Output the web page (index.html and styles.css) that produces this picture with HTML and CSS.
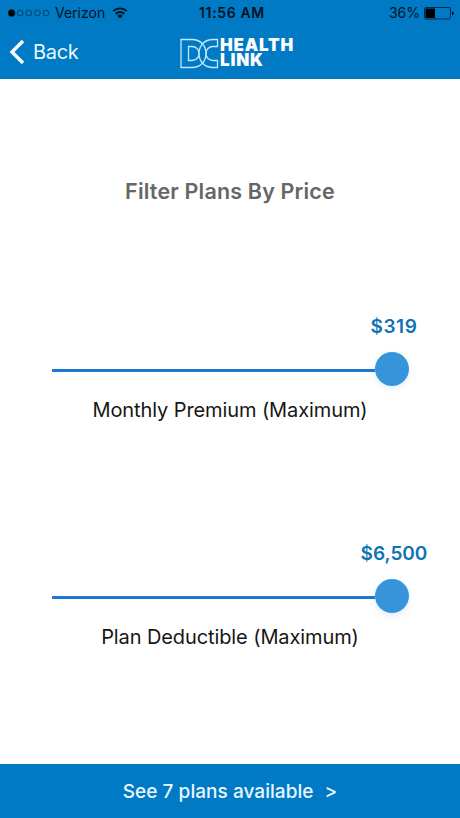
FILE: index.html
```
<!DOCTYPE html>
<html lang="en">

<head>
    <meta charset="UTF-8">
    <meta name="viewport" content="width=device-width, initial-scale=1.0">
    <title>DC Health Link - Filter Plans</title>
    <link rel="stylesheet" href="styles.css">
</head>

<body>
    <header class="header">
        <div class="status-bar">
            <div class="status-left">
                <svg class="signal" width="42" height="8" viewBox="0 0 42 8">
                    <circle class="signal-on" cx="3.6" cy="4" r="3.5" />
                    <circle cx="12.2" cy="4" r="2.9" />
                    <circle cx="20.8" cy="4" r="2.9" />
                    <circle cx="29.4" cy="4" r="2.9" />
                    <circle cx="38" cy="4" r="2.9" />
                </svg>
                <span class="carrier">Verizon</span>
                <svg class="wifi" width="16" height="12" viewBox="0 0 16 12">
                    <path d="M1.2 4.2a9.7 9.7 0 0 1 13.6 0M3.6 6.8a6.3 6.3 0 0 1 8.8 0" />
                    <path class="wifi-dot" d="M8 11.5L5.2 8.8a4 4 0 0 1 5.6 0z" />
                </svg>
            </div>
            <span class="clock">11:56 AM</span>
            <div class="status-right">
                <span class="battery-text">36%</span>
                <svg class="battery" width="30" height="13" viewBox="0 0 30 13">
                    <rect class="battery-case" x="0.5" y="0.5" width="26" height="11.5" rx="1.5" />
                    <rect x="1.5" y="1.5" width="9.5" height="9.5" />
                    <path d="M28 4.2q1.6.6 1.6 2t-1.6 2z" />
                </svg>
            </div>
        </div>
        <nav class="nav-bar">
            <a class="back" href="#">
                <svg width="16" height="26" viewBox="0 0 16 26">
                    <path d="M14 2L3 13l11 11" />
                </svg>
                <span>Back</span>
            </a>
            <div class="logo">
                <svg width="39" height="31" viewBox="0 0 39 31">
                    <path d="M1 1.500h11c8.500 0 14 6 14 14s-5.500 14-14 14H1zM8.500 8.500v14h3.500c4 0 7-2.800 7-7s-3-7-7-7z" />
                    <path d="M37.500 1.500H33c-8.500 0-14 6-14 14s5.500 14 14 14h4.500v-7H33c-4 0-7-2.800-7-7s3-7 7-7h4.500z" />
                </svg>
                <div class="logo-text">
                    <div class="logo-health">HEALTH</div>
                    <div class="logo-link">LINK</div>
                </div>
            </div>
        </nav>
    </header>

    <main class="content">
        <h1>Filter Plans By Price</h1>

        <section class="filter">
            <div class="value premium">$319</div>
            <div class="slider">
                <div class="track"></div>
                <div class="thumb"></div>
            </div>
            <div class="filter-label">Monthly Premium (Maximum)</div>
        </section>

        <section class="filter">
            <div class="value">$6,500</div>
            <div class="slider">
                <div class="track"></div>
                <div class="thumb"></div>
            </div>
            <div class="filter-label">Plan Deductible (Maximum)</div>
        </section>
    </main>

    <button class="see-plans"><span>See 7 plans available</span><span>&gt;</span></button>
</body>

</html>
```

FILE: styles.css
```
body {
    font-family: 'Inter', sans-serif;
    margin: 0;
    background-color: #fff;
    display: flex;
    flex-direction: column;
    height: 818px;
    overflow: hidden;
}

.header {
    background-color: #007ac5;
    height: 79px;
    flex-shrink: 0;
}

.status-bar {
    display: grid;
    grid-template-columns: 1fr auto 1fr;
    align-items: center;
    height: 26px;
    padding: 0 6px 0 8px;
    font-size: 14px;
    line-height: 26px;
    color: #001320;
}

.status-left,
.status-right {
    display: flex;
    align-items: center;
}

.status-right {
    justify-content: flex-end;
    gap: 4px;
}

.signal {
    fill: none;
    stroke: #003354;
    stroke-width: 0.8;
}

.signal-on {
    fill: #000;
}

.carrier {
    margin: 0 7px 0 5px;
}

.wifi {
    fill: none;
    stroke: #001320;
    stroke-width: 1.8;
}

.wifi-dot {
    fill: #001320;
    stroke: none;
}

.clock {
    font-weight: 600;
    letter-spacing: 0.65px;
    padding-left: 2px;
}

.battery-case {
    fill: none;
    stroke: #002a45;
}

.nav-bar {
    display: grid;
    grid-template-columns: 1fr auto 1fr;
    align-items: center;
    height: 52px;
    padding: 0 0 0 9px;
}

.back {
    display: flex;
    align-items: center;
    gap: 8px;
    color: #e9f7ff;
    font-size: 20px;
    letter-spacing: -0.3px;
    text-decoration: none;
}

.back path {
    fill: none;
    stroke: #fff;
    stroke-width: 3.4;
}

.logo {
    display: flex;
    align-items: center;
    gap: 1px;
    padding: 2px 0 0 5px;
}

.logo path {
    fill: none;
    stroke: #c4e6fa;
    stroke-width: 1.3;
}

.logo-text {
    color: #fff;
    font-size: 17px;
    line-height: 15.5px;
    font-weight: 900;
}

.logo-health {
    letter-spacing: 0.8px;
}

.logo-link {
    letter-spacing: 0.8px;
}

.content {
    flex: 1;
    min-height: 0;
}

h1 {
    margin: 98px 0 112px;
    text-align: center;
    font-size: 21.5px;
    line-height: 28px;
    font-weight: 600;
    letter-spacing: 0.17px;
    color: #666;
}

.filter {
    height: 227px;
}

.value {
    width: 136px;
    margin-left: 326px;
    text-align: center;
    font-size: 19px;
    line-height: 20px;
    font-weight: 600;
    color: #0f73b3;
}

.premium {
    letter-spacing: 0.6px;
}

.slider {
    display: flex;
    align-items: center;
    height: 34px;
    margin: 15px 51px 0 52px;
}

.track {
    flex: 1;
    height: 3px;
    margin-top: 3px;
    background-color: #1c78d0;
}

.thumb {
    width: 34px;
    height: 34px;
    border-radius: 50%;
    background-color: #3794da;
    box-shadow: 0 3px 7px rgba(55, 148, 218, 0.15);
}

.filter-label {
    margin-top: 12px;
    text-align: center;
    font-size: 20px;
    line-height: 25px;
    letter-spacing: -0.1px;
    color: #161616;
}

.see-plans {
    display: flex;
    align-items: center;
    justify-content: center;
    gap: 11px;
    height: 54px;
    flex-shrink: 0;
    border: none;
    background-color: #007ac5;
    color: #e9f7ff;
    font-family: inherit;
    font-size: 19px;
    font-weight: 500;
    letter-spacing: 0.05px;
}
```
